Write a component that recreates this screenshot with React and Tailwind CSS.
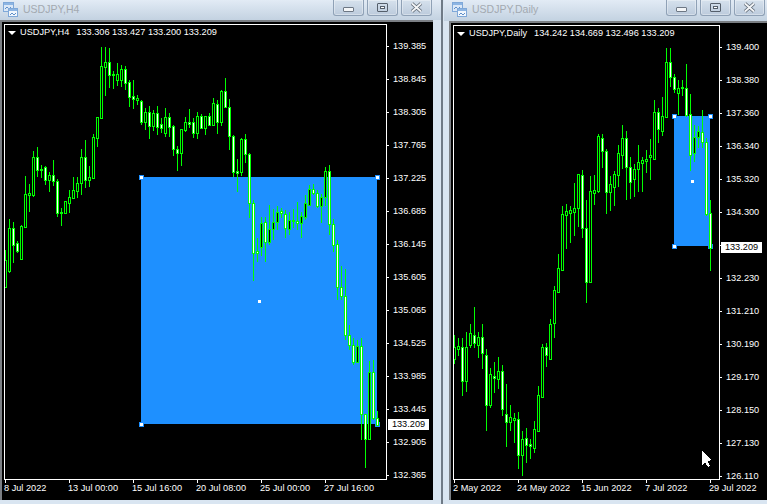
const H4_CANDLES = [
  [250,288,260,287,'b'],[219,273,228,271,'b'],[222,263,228,245,'w'],[241,253,243,251,'w'],[225,260,226,259,'b'],
  [176,228,194,227,'b'],[184,212,193,195,'b'],[151,197,157,195,'b'],[147,177,157,170,'w'],[165,178,169,170,'w'],
  [166,185,167,180,'w'],[172,192,175,180,'b'],[160,186,175,181,'w'],[179,217,181,213,'w'],[208,226,212,213,'w'],
  [201,214,201,213,'b'],[190,213,197,203,'b'],[177,198,190,198,'b'],[177,198,183,191,'b'],[149,195,157,183,'b'],
  [140,188,157,180,'w'],[166,187,177,180,'b'],[134,179,137,178,'b'],[117,147,117,138,'b'],[47,118,66,118,'b'],
  [47,96,62,67,'b'],[48,88,62,75,'w'],[71,89,74,75,'w'],[63,86,74,80,'b'],[65,87,69,80,'b'],
  [66,90,69,83,'w'],[80,107,82,97,'w'],[80,109,96,99,'w'],[95,105,98,100,'b'],[100,125,101,122,'w'],
  [108,130,112,122,'b'],[106,139,112,126,'w'],[110,131,113,126,'b'],[106,135,113,127,'w'],[118,133,124,128,'w'],
  [108,137,117,133,'b'],[113,137,117,127,'w'],[125,156,126,149,'w'],[146,171,149,153,'w'],[129,166,129,153,'b'],
  [117,132,122,130,'b'],[109,128,122,124,'w'],[118,138,122,133,'w'],[112,139,116,133,'b'],[114,129,116,128,'w'],
  [116,135,116,128,'b'],[113,126,116,125,'w'],[98,126,103,125,'b'],[100,134,104,122,'w'],[90,126,91,122,'b'],
  [78,108,91,107,'w'],[99,150,107,136,'w'],[135,177,136,172,'w'],[159,192,171,173,'w'],[138,176,139,172,'b'],
  [134,163,139,154,'w'],[153,218,154,203,'w'],[200,281,203,253,'w'],[238,262,251,253,'w'],[217,256,223,247,'b'],
  [217,262,222,242,'w'],[205,245,229,242,'b'],[209,240,222,229,'b'],[206,230,212,222,'b'],[208,218,211,213,'w'],
  [210,238,214,228,'w'],[212,235,220,229,'b'],[209,228,220,221,'w'],[202,230,221,223,'w'],[212,238,216,223,'b'],
  [195,220,203,217,'b'],[185,205,189,205,'b'],[184,195,189,193,'w'],[190,208,193,206,'w'],[194,223,197,206,'b'],
  [167,206,171,197,'b'],[165,235,171,224,'w'],[219,252,224,245,'w'],[240,300,244,287,'w'],[266,300,287,296,'w'],
  [269,340,296,335,'w'],[325,350,335,345,'w'],[338,365,345,362,'w'],[340,362,346,362,'b'],[338,440,346,414,'w'],
  [414,468,414,439,'w'],[361,440,372,439,'b'],[360,420,372,418,'w'],[411,426,418,425,'w'],
]

const DAILY_CANDLES = [
  [335,364,347,359,'b'],[338,356,346,349,'b'],[338,396,347,381,'w'],[332,392,347,381,'b'],[324,348,333,345,'b'],
  [307,348,335,343,'w'],[332,358,337,345,'b'],[324,369,337,353,'w'],[349,431,355,405,'w'],[368,408,374,405,'b'],
  [362,393,376,378,'w'],[357,389,371,379,'b'],[365,416,371,409,'w'],[384,447,414,422,'w'],[405,431,417,422,'b'],
  [413,443,418,420,'b'],[412,469,419,455,'w'],[431,476,439,455,'b'],[428,463,438,445,'w'],[439,459,444,446,'w'],
  [421,453,429,448,'b'],[386,431,395,431,'b'],[344,397,347,397,'b'],[343,367,347,355,'w'],[319,360,324,359,'b'],
  [286,338,290,323,'b'],[254,292,268,292,'b'],[206,270,214,270,'b'],[204,249,211,215,'b'],[206,243,210,213,'b'],
  [183,236,208,212,'b'],[174,227,174,208,'b'],[170,238,175,228,'w'],[200,303,228,282,'w'],[176,282,191,282,'b'],
  [175,205,190,193,'b'],[134,193,136,191,'b'],[134,168,138,151,'w'],[149,214,151,192,'w'],[176,211,184,192,'b'],
  [171,206,174,187,'b'],[145,187,153,175,'b'],[125,169,138,155,'b'],[131,200,138,167,'w'],[157,199,167,182,'w'],
  [164,197,169,179,'b'],[145,192,162,169,'b'],[157,192,160,163,'b'],[150,173,159,161,'b'],[139,180,155,157,'b'],
  [100,160,112,159,'b'],[108,143,112,129,'w'],[97,136,116,131,'b'],[48,118,62,117,'b'],[48,87,62,77,'w'],
  [74,93,77,89,'w'],[80,115,88,93,'b'],[80,96,87,88,'w'],[64,117,88,115,'w'],[94,171,114,155,'w'],
  [125,162,137,153,'b'],[126,148,131,137,'b'],[110,148,132,142,'w'],[138,216,142,214,'w'],[200,271,213,248,'w'],
]

function Candles({ data, startX }) {
  return data.map(([high, low, top, bottom, kind], i) => {
    const x = startX + i * 4
    return (
      <g key={x}>
        <rect x={x} y={high} width="1" height={low - high} fill="#00ff00" />
        <rect x={x - 1} y={top} width="3" height={bottom - top + 1} fill="#00ff00" />
        {bottom - top > 1 && (
          <rect x={x} y={top + 1} width="1" height={bottom - top - 1} fill={kind === 'w' ? '#ffffff' : '#000000'} />
        )}
      </g>
    )
  })
}

function Handle({ x, y }) {
  return (
    <g>
      <rect x={x - 2} y={y - 2} width="5" height="5" fill="#1e90ff" />
      <rect x={x - 1} y={y - 1} width="3" height="3" fill="#ffffff" />
    </g>
  )
}

function SelectedRect({ left, top, right, bottom }) {
  return (
    <>
      <rect x={left} y={top} width={right - left} height={bottom - top} fill="#1e90ff" />
      <Handle x={left} y={top} />
      <Handle x={right} y={top} />
      <Handle x={left} y={bottom} />
      <Handle x={right} y={bottom} />
      <rect x={(left + right) / 2 - 1} y={(top + bottom) / 2 - 1} width="3" height="3" fill="#ffffff" />
    </>
  )
}

function WindowIcon() {
  return (
    <svg width="15" height="15" viewBox="0 0 15 15" className="shrink-0" shapeRendering="crispEdges">
      <rect x="0.5" y="0.5" width="10" height="9" fill="#dbe8f7" stroke="#7fa8d8" />
      <rect x="1" y="1" width="9" height="2" fill="#8db5e3" />
      <path d="M2 7 L4 5 L6 7 L8 5" fill="none" stroke="#5f8fc9" />
      <rect x="5.5" y="6.5" width="9" height="8" fill="#f2f7fd" stroke="#7fa8d8" />
      <rect x="6" y="7" width="8" height="2" fill="#8db5e3" />
      <path d="M7 13 L9 11 L11 13 L13 11" fill="none" stroke="#5f8fc9" />
    </svg>
  )
}

function TitleButton({ children }) {
  return (
    <div className="flex h-[16px] w-[31px] items-center justify-center rounded-b-[3px] border border-t-0 border-[#8fa1b6] bg-gradient-to-b from-[#d6e1ed] to-[#bccbdc] shadow-[inset_0_0_0_1px_rgba(255,255,255,0.35)]">
      {children}
    </div>
  )
}

function TitleBar({ title, className }) {
  return (
    <div className={`flex items-start bg-gradient-to-b from-[#e2ebf5] to-[#c3d2e1] ${className}`}>
      <div className="mt-[2px]">
        <WindowIcon />
      </div>
      <div className="ml-[5px] mt-[2px] text-[10.5px] leading-[15px] text-[#a3a9b0]">{title}</div>
      <div className="ml-auto flex gap-[3px]">
        <TitleButton>
          <div className="mt-[3px] h-[5px] w-[11px] rounded-[1px] border border-[#6d7784] bg-[#f4f6f8]" />
        </TitleButton>
        <TitleButton>
          <div className="flex h-[9px] w-[11px] items-center justify-center rounded-[1px] border border-[#555f6b]">
            <div className="h-[3px] w-[5px] border border-[#555f6b] bg-white" />
          </div>
        </TitleButton>
        <TitleButton>
          <svg width="13" height="11" viewBox="0 0 13 11">
            <path d="M2 1.5 L11 9.5 M11 1.5 L2 9.5" stroke="#5a6470" strokeWidth="3.4" />
            <path d="M2 1.5 L11 9.5 M11 1.5 L2 9.5" stroke="#f3f5f7" strokeWidth="1.8" />
          </svg>
        </TitleButton>
      </div>
    </div>
  )
}

function PriceAxis({ labels }) {
  return (
    <div className="w-[46px] pt-[6px]">
      {labels.map((label, i) => (
        <div key={i} className="flex h-[33px] items-center">
          <div className="h-px w-[2px] bg-white" />
          <span className="ml-[4px] text-white">{label}</span>
        </div>
      ))}
    </div>
  )
}

function TimeAxis({ labels }) {
  return (
    <div className="flex h-[20px]">
      {labels.map((label) => (
        <div key={label} className="w-[64px] shrink-0 whitespace-nowrap">
          <div className="ml-px h-[3px] w-px bg-white" />
          <div className="leading-[11px] text-white">{label}</div>
        </div>
      ))}
    </div>
  )
}

function ChartHeader({ symbol, values }) {
  return (
    <div className="absolute left-[3px] top-[1px] flex h-[13px] items-center whitespace-pre text-white">
      <div className="h-0 w-0 border-x-[4px] border-t-[4px] border-x-transparent border-t-white" />
      <span className="ml-[4px]">{symbol}</span>
      <span className="ml-[7px]">{values}</span>
    </div>
  )
}

export default function App() {
  return (
    <div className="flex h-[504px] w-[767px] overflow-hidden bg-[#d9e5f1] font-['Liberation_Sans',Arial,sans-serif] text-[9.2px]">
      {/* H4 window */}
      <div className="w-[441px] shrink-0">
        <TitleBar title="USDJPY,H4" className="h-[20px] pl-[3px] pr-[9px]" />
        <div className="h-[480px] w-[433px] border-l-2 border-t-2 border-[#7b7f84] bg-black pl-[2px] pt-[2px]">
          <div className="flex h-[456px]">
            <div className="relative w-[383px] shrink-0 border border-white">
              <svg width="381" height="454" viewBox="5 25 381 454" className="block" shapeRendering="crispEdges">
                <SelectedRect left={141} top={177} right={377} bottom={424} />
                <Candles data={H4_CANDLES} startX={5} />
              </svg>
              <ChartHeader symbol="USDJPY,H4" values="133.306 133.427 133.200 133.209" />
            </div>
            <div className="relative">
              <PriceAxis labels={['139.385','138.845','138.305','137.765','137.225','136.685','136.145','135.605','135.065','134.525','133.985','133.445','132.905','132.365']} />
              <div className="absolute left-[1px] top-[395px] flex h-[11px] w-[41px] items-center justify-center bg-white leading-none text-black">133.209</div>
            </div>
          </div>
          <TimeAxis labels={['8 Jul 2022','13 Jul 00:00','15 Jul 16:00','20 Jul 08:00','25 Jul 00:00','27 Jul 16:00']} />
        </div>
      </div>

      <div className="mr-px w-[2px] shrink-0 bg-[#6f7a86]" />

      {/* Daily window */}
      <div className="min-w-0 flex-1">
        <TitleBar title="USDJPY,Daily" className="h-[21px] pl-[8px] pr-[2px]" />
        <div className="ml-[5px] h-[479px] border-l-2 border-t-2 border-[#7b7f84] bg-black pl-[2px] pt-[2px]">
          <div className="flex h-[455px]">
            <div className="relative w-[267px] shrink-0 border border-white">
              <svg width="265" height="453" viewBox="454 26 265 453" className="block" shapeRendering="crispEdges">
                <SelectedRect left={674} top={116} right={710} bottom={246} />
                <Candles data={DAILY_CANDLES} startX={454} />
                <path d="M702 451 V465 L705 462 L708 467 L710 466 L707.5 461 L712 460 Z" fill="#ffffff" />
              </svg>
              <ChartHeader symbol="USDJPY,Daily" values="134.242 134.669 132.496 133.209" />
            </div>
            <div className="relative">
              <PriceAxis labels={['139.400','138.380','137.360','136.340','135.320','134.300','','132.230','131.210','130.190','129.170','128.150','127.130','126.110']} />
              <div className="absolute left-[1px] top-[217px] flex h-[11px] w-[41px] items-center justify-center bg-white leading-none text-black">133.209</div>
            </div>
          </div>
          <TimeAxis labels={['2 May 2022','24 May 2022','15 Jun 2022','7 Jul 2022','29 Jul 2022']} />
        </div>
      </div>
    </div>
  )
}
